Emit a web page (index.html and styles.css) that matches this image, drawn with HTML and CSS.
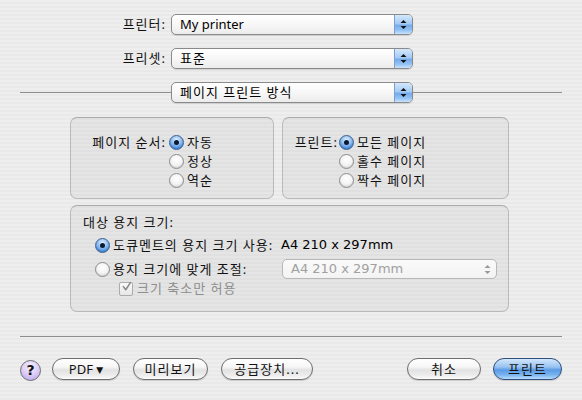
FILE: index.html
```html
<!DOCTYPE html>
<html lang="ko">
<head>
<meta charset="utf-8">
<title>프린트</title>
<link rel="stylesheet" href="styles.css">
</head>
<body>
<div class="dialog">
  <div class="field">
    <span class="field-label">프린터:</span>
    <div class="popup popup-main">
      <span class="popup-text plain">My printer</span>
      <span class="popup-arrows"><svg width="7" height="11" viewBox="0 0 7 11"><path d="M3.5 1 L6.5 4 L0.5 4 Z M0.5 7 L6.5 7 L3.5 10 Z" fill="#111"/></svg></span>
    </div>
  </div>
  <div class="field">
    <span class="field-label">프리셋:</span>
    <div class="popup popup-main">
      <span class="popup-text">표준</span>
      <span class="popup-arrows"><svg width="7" height="11" viewBox="0 0 7 11"><path d="M3.5 1 L6.5 4 L0.5 4 Z M0.5 7 L6.5 7 L3.5 10 Z" fill="#111"/></svg></span>
    </div>
  </div>
  <div class="field field-sep">
    <span class="rule rule-left"></span>
    <div class="popup popup-main">
      <span class="popup-text">페이지 프린트 방식</span>
      <span class="popup-arrows"><svg width="7" height="11" viewBox="0 0 7 11"><path d="M3.5 1 L6.5 4 L0.5 4 Z M0.5 7 L6.5 7 L3.5 10 Z" fill="#111"/></svg></span>
    </div>
    <span class="rule rule-right"></span>
  </div>

  <div class="groups">
    <div class="group group-order">
      <span class="group-label order-label">페이지 순서:</span>
      <div class="radio-list">
        <div class="radio-row"><span class="radio on"></span><span class="radio-text">자동</span></div>
        <div class="radio-row"><span class="radio"></span><span class="radio-text">정상</span></div>
        <div class="radio-row"><span class="radio"></span><span class="radio-text">역순</span></div>
      </div>
    </div>
    <div class="group group-pages">
      <span class="group-label pages-label">프린트:</span>
      <div class="radio-list">
        <div class="radio-row"><span class="radio on"></span><span class="radio-text">모든 페이지</span></div>
        <div class="radio-row"><span class="radio"></span><span class="radio-text">홀수 페이지</span></div>
        <div class="radio-row"><span class="radio"></span><span class="radio-text">짝수 페이지</span></div>
      </div>
    </div>
  </div>

  <div class="group group-paper">
    <div class="paper-title">대상 용지 크기:</div>
    <div class="paper-row paper-row-1">
      <div class="paper-opt"><span class="radio on"></span><span class="radio-text">도큐멘트의 용지 크기 사용:</span></div>
      <span class="paper-value latin">A4 210 x 297mm</span>
    </div>
    <div class="paper-row paper-row-2">
      <div class="paper-opt"><span class="radio"></span><span class="radio-text">용지 크기에 맞게 조절:</span></div>
      <div class="popup popup-disabled">
        <span class="popup-text latin">A4 210 x 297mm</span>
        <span class="popup-arrows"><svg width="7" height="11" viewBox="0 0 7 11"><path d="M3.5 1 L6.5 4 L0.5 4 Z M0.5 7 L6.5 7 L3.5 10 Z" fill="#9a9a9a"/></svg></span>
      </div>
    </div>
    <div class="paper-check">
      <span class="checkbox"><svg width="14" height="14" viewBox="0 0 14 14"><path d="M3 6.5 L6 10.5 L12 1.5" fill="none" stroke="#8a8a8a" stroke-width="2" stroke-linecap="round" stroke-linejoin="round"/></svg></span>
      <span class="check-text">크기 축소만 허용</span>
    </div>
  </div>

  <div class="separator"></div>

  <div class="buttons">
    <div class="buttons-left">
      <span class="help">?</span>
      <span class="btn btn-pdf plain">PDF <span class="pdf-arrow">▼</span></span>
      <span class="btn btn-preview">미리보기</span>
      <span class="btn btn-supplies">공급장치...</span>
    </div>
    <div class="buttons-right">
      <span class="btn btn-cancel">취소</span>
      <span class="btn btn-default">프린트</span>
    </div>
  </div>
</div>
</body>
</html>
```

FILE: styles.css
```css
* { box-sizing: border-box; }

html, body {
  margin: 0;
  padding: 0;
}

body {
  font-family: "Noto Sans", "Noto Sans CJK KR", sans-serif;
  font-size: 13px;
  letter-spacing: 1px;
  color: #000;
}

.plain {
  letter-spacing: 0;
}

.latin {
  font-family: "DejaVu Sans", "Noto Sans", sans-serif;
  letter-spacing: 0;
}

.dialog {
  width: 582px;
  height: 400px;
  padding: 14px 20px 0;
  display: flex;
  flex-direction: column;
  background: repeating-linear-gradient(to bottom, #eeeeee 0, #eeeeee 2px, #e9e9e9 2px, #e9e9e9 4px);
  overflow: hidden;
}

/* top fields */
.field {
  display: flex;
  align-items: center;
  height: 21px;
  margin-bottom: 13px;
}

.field-label {
  width: 151px;
  padding-right: 5px;
  text-align: right;
  line-height: 21px;
  color: #111;
}

.field-sep {
  margin-bottom: 0;
}

.rule {
  height: 1px;
  background: #8e8e8e;
}

.rule-left { width: 151px; }
.rule-right { flex: 1; }

.popup {
  display: flex;
  align-items: stretch;
  height: 21px;
  border: 1px solid #8a8a8a;
  border-radius: 5px;
  overflow: hidden;
  background: linear-gradient(to bottom, #ffffff 0%, #f7f7f7 50%, #ececec 100%);
  box-shadow: 0 1px 1px rgba(0, 0, 0, 0.12);
}

.popup-main {
  width: 242px;
}

.popup-text {
  flex: 1;
  padding-left: 8px;
  line-height: 19px;
  white-space: nowrap;
}

.popup-arrows {
  width: 18px;
  display: flex;
  align-items: center;
  justify-content: center;
  border-left: 1px solid #7f9fcb;
  background: linear-gradient(to bottom, #d5e8fc 0%, #a4cbf4 45%, #76acec 55%, #92c2f3 80%, #c9e3fd 100%);
}

.popup-disabled {
  width: 215px;
  height: 20px;
  border-color: #b8b8b8;
  background: linear-gradient(to bottom, #fafafa 0%, #f3f3f3 100%);
  box-shadow: none;
  color: #a0a0a0;
}

.popup-disabled .popup-text {
  line-height: 18px;
}

.popup-disabled .popup-arrows {
  border-left: none;
  background: none;
}

/* group boxes */
.groups {
  display: flex;
  gap: 8px;
  margin-top: 14px;
  margin-left: 50px;
}

.group {
  border: 1px solid rgba(0, 0, 0, 0.18);
  border-top-color: rgba(0, 0, 0, 0.26);
  border-radius: 7px;
  background: rgba(0, 0, 0, 0.035);
}

.group-order,
.group-pages {
  height: 82px;
  display: flex;
  align-items: flex-start;
  padding-top: 15px;
}

.group-order { width: 204px; }
.group-pages { width: 227px; }

.group-label {
  text-align: right;
  line-height: 19px;
  color: #111;
}

.order-label { width: 95px; margin-right: 3px; }
.pages-label { width: 55px; margin-right: 1px; }

.radio-list {
  display: flex;
  flex-direction: column;
}

.radio-row {
  display: flex;
  align-items: center;
  height: 19px;
}

.radio {
  width: 15px;
  height: 15px;
  border-radius: 50%;
  border: 1px solid #8c8c8c;
  background: radial-gradient(circle at 50% 35%, #ffffff 0%, #f4f4f4 50%, #d6d6d6 100%);
  box-shadow: inset 0 -1px 1px rgba(0, 0, 0, 0.08);
  position: relative;
  flex: none;
}

.radio.on {
  border-color: #3e5f8e;
  background: radial-gradient(circle at 50% 30%, #e4f0fd 0%, #8ebdf0 45%, #3f86dc 80%, #6aa9ee 100%);
}

.radio.on::after {
  content: "";
  position: absolute;
  left: 4px;
  top: 4px;
  width: 5px;
  height: 5px;
  border-radius: 50%;
  background: #0b1a33;
}

.radio-text {
  margin-left: 3px;
  line-height: 19px;
  white-space: nowrap;
  color: #111;
}

.group-paper {
  width: 439px;
  height: 107px;
  margin-top: 6px;
  margin-left: 50px;
  padding: 7px 0 0 12px;
}

.paper-title {
  height: 19px;
  line-height: 19px;
  color: #111;
}

.paper-row {
  display: flex;
  align-items: center;
  height: 20px;
}

.paper-row-1 { margin-top: 3px; }
.paper-row-2 { margin-top: 4px; }

.paper-opt {
  display: flex;
  align-items: center;
  width: 186px;
  margin-left: 12px;
}

.paper-value {
  line-height: 20px;
  white-space: nowrap;
}

.paper-row-2 .popup-disabled {
  margin-left: 1px;
}

.paper-check {
  display: flex;
  align-items: center;
  height: 19px;
  margin-left: 36px;
  color: #8e8e8e;
}

.checkbox {
  width: 14px;
  height: 14px;
  border: 1px solid #ababab;
  border-radius: 2px;
  background: linear-gradient(to bottom, #fbfbfb, #e6e6e6);
  display: flex;
  align-items: center;
  justify-content: center;
  overflow: visible;
}

.checkbox svg {
  margin-top: -3px;
  margin-left: 1px;
}

.check-text {
  margin-left: 4px;
  line-height: 19px;
}

/* bottom */
.separator {
  height: 1px;
  margin-top: 24px;
  background: #8e8e8e;
}

.buttons {
  display: flex;
  justify-content: space-between;
  align-items: center;
  margin-top: 21px;
  height: 22px;
}

.buttons-left,
.buttons-right {
  display: flex;
  align-items: center;
}

.btn {
  height: 22px;
  line-height: 20px;
  border: 1px solid #6e6e6e;
  border-radius: 11px;
  background: linear-gradient(to bottom, #ffffff 0%, #f6f6f6 40%, #e2e2e2 55%, #ececec 80%, #fbfbfb 100%);
  box-shadow: 0 1px 1px rgba(0, 0, 0, 0.15);
  text-align: center;
  white-space: nowrap;
  color: #111;
}

.help {
  width: 21px;
  height: 21px;
  margin-top: 2px;
  border: 1px solid #6f6f6f;
  border-radius: 50%;
  background: radial-gradient(circle at 50% 30%, #f6f0ff 0%, #dccdf8 50%, #b29ce6 100%);
  font-family: "DejaVu Sans", sans-serif;
  font-weight: bold;
  font-size: 14px;
  letter-spacing: 0;
  line-height: 19px;
  text-align: center;
  color: #111;
  margin-right: 11px;
}

.btn-pdf { width: 68px; margin-right: 13px; }
.pdf-arrow { font-family: "DejaVu Sans", sans-serif; font-size: 9px; position: relative; top: -1px; }
.btn-preview { width: 75px; margin-right: 13px; }
.btn-supplies { width: 92px; }
.btn-cancel { width: 74px; margin-right: 12px; }

.btn-default {
  width: 69px;
  border-color: #2f4f7f;
  background: linear-gradient(to bottom, #d3e6fb 0%, #98c3f2 40%, #5b9ae4 55%, #7ab4ef 80%, #b9dcfc 100%);
}
```
